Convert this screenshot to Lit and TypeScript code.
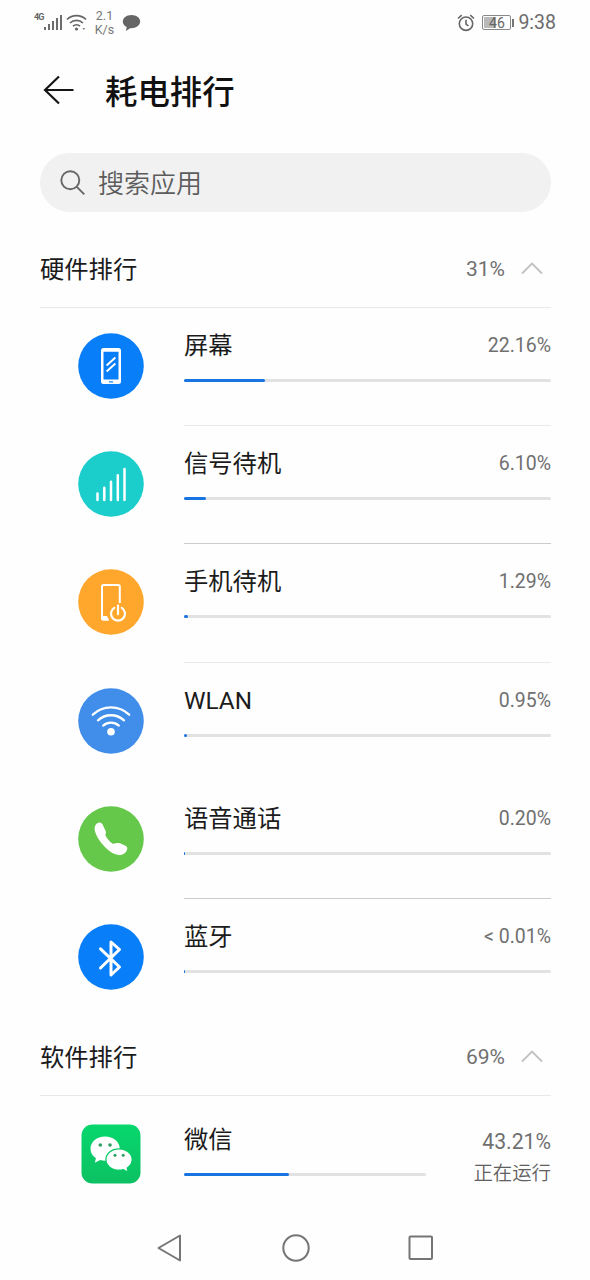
import { LitElement, html, css, svg, type SVGTemplateResult } from "lit";
import { customElement, property } from "lit/decorators.js";

type IconName = "screen" | "signal" | "standby" | "wlan" | "call" | "bluetooth" | "wechat";

interface Item {
  icon: IconName;
  name: string;
  percent: string;
  bar: number;
  divider?: "light" | "dark";
  status?: string;
}

const HARDWARE: Item[] = [
  { icon: "screen", name: "屏幕", percent: "22.16%", bar: 22.16, divider: "light" },
  { icon: "signal", name: "信号待机", percent: "6.10%", bar: 6.1, divider: "dark" },
  { icon: "standby", name: "手机待机", percent: "1.29%", bar: 1.2, divider: "light" },
  { icon: "wlan", name: "WLAN", percent: "0.95%", bar: 0.95 },
  { icon: "call", name: "语音通话", percent: "0.20%", bar: 0.3, divider: "dark" },
  { icon: "bluetooth", name: "蓝牙", percent: "< 0.01%", bar: 0.2 },
];

const SOFTWARE: Item[] = [
  { icon: "wechat", name: "微信", percent: "43.21%", bar: 43.21, status: "正在运行" },
];

const ICONS: Record<IconName, SVGTemplateResult> = {
  screen: svg`
    <circle cx="33" cy="33" r="32.8" fill="#087ef8"/>
    <path fill="#fff" fill-rule="evenodd" d="M25.5 15h15a2.5 2.5 0 0 1 2.500 2.500v31a2.500 2.500 0 0 1-2.500 2.500h-15a2.500 2.500 0 0 1-2.500-2.500v-31a2.500 2.500 0 0 1 2.500-2.500zM25.500 18.800v27.700h15V18.800z"/>
    <path d="M28.600 32.500l8.800-8M28.600 38.500l8.800-8" stroke="#fff" stroke-width="1.900" fill="none"/>
    <path d="M31 48.900h4" stroke="#087ef8" stroke-width="1.200"/>`,
  signal: svg`
    <circle cx="33" cy="33" r="32.800" fill="#1bcdcb"/>
    <path d="M19.500 42.500v6.500M26.300 36.800v12.200M33 30.800v18.200M39.800 24.200v24.800M46.500 18v31" stroke="#fff" stroke-width="2.500" stroke-linecap="round"/>`,
  standby: svg`
    <circle cx="33" cy="33" r="32.800" fill="#ffa72c"/>
    <path d="M41.800 34V17.500a1.500 1.500 0 0 0-1.500-1.500H25.500a1.500 1.500 0 0 0-1.500 1.500V49a1.500 1.500 0 0 0 1.500 1.500h5" fill="none" stroke="#fff" stroke-width="2"/>
    <path d="M23.500 47h5.500l2 4.500h-6a1.500 1.500 0 0 1-1.500-1.500z" fill="#fff"/>
    <path d="M36.200 38.800a7 7 0 1 0 7.600 0M40 36.500v8.700" fill="none" stroke="#fff" stroke-width="2.200" stroke-linecap="round"/>`,
  wlan: svg`
    <circle cx="33" cy="33" r="32.800" fill="#408eea"/>
    <g fill="none" stroke="#fff" stroke-width="2.300" stroke-linecap="round">
      <path d="M14.800 26.700a26.500 26.500 0 0 1 36.400 0"/>
      <path d="M20 32.300a19.200 19.200 0 0 1 26 0"/>
      <path d="M25.200 37.600a11.800 11.800 0 0 1 15.600 0"/>
    </g>
    <circle cx="33" cy="43.700" r="3.800" fill="#fff"/>`,
  call: svg`
    <circle cx="33" cy="33" r="32.800" fill="#66c84b"/>
    <path fill="#fff" d="M18.600 17.800c2.200-2 4.800-1.600 6 .8l3 6.400c.7 1.500.3 2.600-.3 3.900 1.700 3.700 4.300 6.800 7.900 9.200 2-1.200 4.400-1.500 6.800-.8l5 2.300c2.600 1.200 2.900 3 1.500 5.400-1.700 3-4.300 4.400-7.800 4.100-4.500-.5-9-3.500-13.800-8.200-4.600-4.600-8.600-10.500-10-15.900-.7-3.100-.3-5.300 1.700-7.200z"/>`,
  bluetooth: svg`
    <circle cx="33" cy="33" r="32.800" fill="#087ef8"/>
    <path d="M22.500 24.800L41.500 43 33 51V18L41.500 25.500 22.500 44" fill="none" stroke="#fff" stroke-width="3" stroke-linejoin="round" stroke-linecap="round"/>`,
  wechat: svg`
    <defs><linearGradient id="wx" x1="0" y1="0" x2="0" y2="1">
      <stop offset="0" stop-color="#08d76d"/><stop offset="1" stop-color="#0cc163"/>
    </linearGradient></defs>
    <rect x="3.500" y="3.500" width="59" height="59" rx="11" fill="url(#wx)"/>
    <path fill="#fff" d="M27 15.500c-8.200 0-14.500 5.300-14.500 12.200 0 4 2 7.200 5.400 9.500l-1 4.600 5.300-2.700c1.500.4 3.100.6 4.800.6 8.200 0 14.800-5.100 14.800-12s-6.600-12.200-14.800-12.200z"/>
    <path fill="#fff" stroke="#0acb67" stroke-width="1.300" d="M41 27.800c-7.300 0-13.100 4.700-13.100 10.700 0 6.100 5.800 10.700 13.100 10.700 1.500 0 3-.2 4.300-.6l4.900 2.700-1-4.300c3.100-2 5-5 5-8.500 0-6-5.900-10.700-13.200-10.700z"/>
    <g fill="#2b9f60"><circle cx="22.300" cy="24" r="1.800"/><circle cx="32" cy="24" r="1.800"/><circle cx="37" cy="34.300" r="1.500"/><circle cx="45.200" cy="34.300" r="1.500"/></g>`,
};

@customElement("status-bar")
class StatusBar extends LitElement {
  static styles = css`
    :host { display: flex; height: 45px; padding: 0 34px; box-sizing: border-box; justify-content: space-between; color: #666; font-family: Roboto, sans-serif; }
    .side { display: flex; height: 45px; align-items: center; }
    .net { display: flex; align-items: flex-start; height: 20px; }
    .gen { font-size: 9px; line-height: 9px; font-weight: 700; letter-spacing: -0.8px; width: 10px; }
    .speed { width: 21px; margin: 1px 7px 0 6px; font-size: 12.5px; line-height: 14.5px; text-align: center; color: #777; }
    .clock { font-size: 19.500px; line-height: 24px; margin-left: 4px; color: #6c6c6c; }
    svg { display: block; }
    .bars { margin-top: -1px; }
    .wifi { margin: -2px 0 0 4px; }
    .battery { display: flex; align-items: center; margin-left: 7px; }
    .cell { box-sizing: border-box; width: 29px; height: 15px; border: 1px solid #888; border-radius: 2px; padding: 1px; font-size: 14px; line-height: 12px; text-align: center; background: linear-gradient(90deg, #b9b9b9 0 12px, transparent 12px) 1px 1px / 25px 11px no-repeat; }
    .tip { width: 2px; height: 8px; margin-left: 1px; background: #777; }
  `;
  render() {
    return html`
      <div class="side">
        <div class="net">
          <span class="gen">4G</span>
          <svg class="bars" width="18" height="20" viewBox="0 0 18 20"><path d="M1 15v3M5 12v6M9 9v9M13 6v12M17 3v15" stroke="#666" stroke-width="1.900"/></svg>
        </div>
        <svg class="wifi" width="22" height="20" viewBox="0 0 22 20">
          <g fill="none" stroke="#666" stroke-width="1.700"><path d="M1 7.500a13.500 13.500 0 0 1 19 0M4 11a9.500 9.500 0 0 1 13 0M7 14.200a5.200 5.200 0 0 1 7 0"/></g>
          <circle cx="10.500" cy="17" r="1.600" fill="#666"/><path d="M16.500 16l1.300 2 1.300-2z" fill="#777"/>
        </svg>
        <div class="speed">2.1<br>K/s</div>
        <svg width="19" height="18" viewBox="0 0 19 18"><path fill="#666" d="M9.500 1C4.600 1 .8 3.900.8 7.500c0 2.300 1.500 4.300 3.900 5.500l-.8 4 4.200-2.800c5.600.4 10.100-2.800 10.100-6.700C18.200 3.900 14.400 1 9.500 1z"/></svg>
      </div>
      <div class="side">
        <svg width="18" height="18" viewBox="0 0 18 18"><g fill="none" stroke="#666" stroke-width="1.600"><circle cx="9" cy="9.700" r="6.700"/><path d="M9 5.700v4.300l2.500 2M1 4.500L4.700 1.200M17 4.500l-3.700-3.300"/></g></svg>
        <div class="battery"><div class="cell">46</div><div class="tip"></div></div>
        <span class="clock">9:38</span>
      </div>`;
  }
}

@customElement("usage-row")
class UsageRow extends LitElement {
  @property({ attribute: false }) item!: Item;
  static styles = css`
    :host { display: block; font-family: Roboto, "Noto Sans CJK SC", sans-serif; }
    .row { display: grid; grid-template-columns: 66px 1fr; column-gap: 40px; height: 118.200px; padding-left: 38px; box-sizing: border-box; }
    .icon { display: block; margin-top: 25px; width: 66px; height: 66px; }
    .body { display: flex; flex-direction: column; box-sizing: border-box; border-bottom: 1px solid transparent; }
    .light { border-color: #eaeaea; }
    .dark { border-color: #cbcbcb; }
    .line { display: flex; justify-content: space-between; height: 36px; line-height: 36px; margin-top: 20px; }
    .name { font-size: 24.300px; color: #1b1b1b; }
    .percent { font-size: 19.500px; color: #707070; }
    .track { height: 3px; margin-top: 15px; border-radius: 2px; background: #e2e2e2; }
    .fill { height: 3px; border-radius: 2px; background: #1874e0; }
    .app { display: grid; grid-template-columns: 242px 1fr; }
    .app .line { margin-top: 26px; }
    .info { text-align: right; color: #707070; padding-top: 28px; }
    .big { font-size: 21.200px; line-height: 36px; }
    .status { font-size: 19.400px; line-height: 27px; font-weight: 350; color: #606060; }
  `;
  render() {
    const { icon, name, percent, bar, divider, status } = this.item;
    const picture = html`<svg class="icon" viewBox="0 0 66 66">${ICONS[icon]}</svg>`;
    const track = html`<div class="track"><div class="fill" style="width:${bar}%"></div></div>`;
    if (status) {
      return html`<div class="row">${picture}
        <div class="app">
          <div><div class="line"><span class="name">${name}</span></div>${track}</div>
          <div class="info"><div class="big">${percent}</div><div class="status">${status}</div></div>
        </div></div>`;
    }
    return html`<div class="row">${picture}
      <div class="body ${divider ?? ""}">
        <div class="line"><span class="name">${name}</span><span class="percent">${percent}</span></div>
        ${track}
      </div></div>`;
  }
}

@customElement("usage-section")
class UsageSection extends LitElement {
  @property() heading = "";
  @property() total = "";
  @property({ attribute: false }) items: Item[] = [];
  static styles = css`
    :host { display: block; padding: 0 39px 0 40px; font-family: Roboto, "Noto Sans CJK SC", sans-serif; }
    .head { display: flex; align-items: center; height: 79px; padding-top: 2px; box-sizing: border-box; border-bottom: 1px solid #e9e9e9; }
    .heading { flex: 1; font-size: 24.300px; color: #1b1b1b; line-height: 38px; padding-top: 1px; }
    .total { font-size: 21px; color: #707070; line-height: 36px; }
    .chevron { display: block; margin: -2px 8px 0 16px; }
  `;
  render() {
    return html`
      <div class="head">
        <span class="heading">${this.heading}</span><span class="total">${this.total}</span>
        <svg class="chevron" width="22" height="14" viewBox="0 0 22 14"><path d="M1 12.500L11 2.500l10 10" fill="none" stroke="#c2c2c2" stroke-width="1.900"/></svg>
      </div>
      ${this.items.map((item) => html`<usage-row .item=${item}></usage-row>`)}`;
  }
}

@customElement("app-root")
class AppRoot extends LitElement {
  static styles = css`
    :host { display: flex; flex-direction: column; height: 1280px; overflow: hidden; background: #fefefe; font-family: Roboto, "Noto Sans CJK SC", sans-serif; }
    .title-bar { display: flex; align-items: center; gap: 30px; height: 90px; padding-left: 43px; }
    .title { margin: 0; font-family: "Noto Sans CJK SC", sans-serif; font-size: 32.400px; font-weight: 500; line-height: 48px; color: #111; }
    .search { display: flex; align-items: center; gap: 12px; height: 59px; margin: 18px 39px 0 40px; padding-left: 20px; box-sizing: border-box; border-radius: 30px; background: #f1f1f1; color: #5c5c5c; font-size: 26px; line-height: 40px; font-weight: 350; }
    .hint { padding-top: 2px; }
    .sections { flex: 1; min-height: 0; padding-top: 17px; overflow: hidden; }
    .nav { display: flex; justify-content: center; align-items: center; gap: 98px; height: 64px; }
    svg { display: block; }
  `;
  render() {
    return html`
      <status-bar></status-bar>
      <div class="title-bar">
        <svg width="32" height="32" viewBox="0 0 32 32"><path d="M16 2.500L2 16l14 13.500M2 16h28.500" fill="none" stroke="#151515" stroke-width="2.200"/></svg>
        <h1 class="title">耗电排行</h1>
      </div>
      <div class="search">
        <svg width="26" height="26" viewBox="0 0 26 26"><g fill="none" stroke="#666" stroke-width="1.900"><circle cx="10.300" cy="10.300" r="9"/><path d="M16.800 16.800l7.500 7.500"/></g></svg>
        <span class="hint">搜索应用</span>
      </div>
      <div class="sections">
        <usage-section heading="硬件排行" total="31%" .items=${HARDWARE}></usage-section>
        <usage-section heading="软件排行" total="69%" .items=${SOFTWARE}></usage-section>
      </div>
      <div class="nav">
        <svg width="28" height="30" viewBox="0 0 28 30"><path d="M24 2.500v25L2.500 15z" fill="none" stroke="#757575" stroke-width="2" stroke-linejoin="round"/></svg>
        <svg width="28" height="28" viewBox="0 0 28 28"><circle cx="14" cy="14" r="12.700" fill="none" stroke="#757575" stroke-width="2"/></svg>
        <svg width="26" height="26" viewBox="0 0 26 26"><rect x="1.500" y="1.500" width="22.500" height="22.500" rx="1" fill="none" stroke="#757575" stroke-width="2"/></svg>
      </div>`;
  }
}
